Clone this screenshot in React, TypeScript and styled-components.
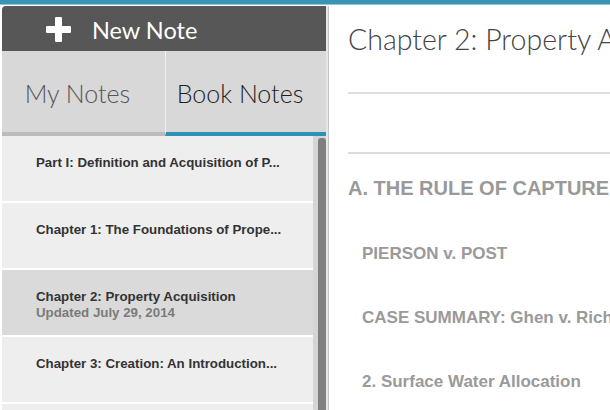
import React from "react";
import styled, { createGlobalStyle } from "styled-components";

const GlobalStyle = createGlobalStyle`
  html, body {
    margin: 0;
    padding: 0;
    background: #ffffff;
    overflow: hidden;
  }
  * { box-sizing: border-box; }
`;

const Page = styled.div`
  width: 610px;
  height: 410px;
  display: flex;
  flex-direction: column;
  overflow: hidden;
  background: #ffffff;
`;

const TopBar = styled.div`
  height: 5px;
  flex: none;
  background: #3a93b3;
  border-bottom: 1px solid #8cc3d6;
`;

const Main = styled.div`
  flex: 1;
  display: flex;
  margin-top: 1px;
  min-height: 0;
`;

const Sidebar = styled.aside`
  width: 324px;
  margin-left: 2px;
  flex: none;
  display: flex;
  flex-direction: column;
`;

const NewNoteButton = styled.div`
  height: 45px;
  flex: none;
  display: flex;
  align-items: center;
  gap: 21px;
  padding: 2px 0 0 44px;
  background: #575757;
  border-top-left-radius: 4px;
  color: #ffffff;
  font-family: Lato, "Liberation Sans", sans-serif;
  font-weight: 400;
  font-size: 23.5px;
`;

const Tabs = styled.div`
  height: 85px;
  flex: none;
  display: flex;
`;

const Tab = styled.div<{ $active?: boolean }>`
  flex: ${(p) => (p.$active ? "0 0 161px" : "0 0 163px")};
  display: flex;
  align-items: center;
  justify-content: center;
  padding: 2px 12px 0 0;
  background: #d8d8d8;
  border-bottom: 4px solid ${(p) => (p.$active ? "#2d92b5" : "#bcbcbc")};
  border-left: ${(p) => (p.$active ? "1px solid #f2f2f2" : "none")};
  color: ${(p) => (p.$active ? "#1e1e1e" : "#555555")};
  font-family: Lato, "Liberation Sans", sans-serif;
  font-weight: 300;
  font-size: 25px;
`;

const ListArea = styled.div`
  flex: 1;
  display: flex;
  min-height: 0;
`;

const List = styled.div`
  flex: 1;
  display: flex;
  flex-direction: column;
  gap: 2px;
  background: #ffffff;
  overflow: hidden;
`;

const Item = styled.div<{ $selected?: boolean }>`
  height: 65px;
  flex: none;
  padding: 19px 0 0 34px;
  background: ${(p) => (p.$selected ? "#dadada" : "#eeeeee")};
  font-family: "Liberation Sans", Arial, sans-serif;
  font-weight: bold;
  font-size: 13.3px;
  line-height: 16px;
`;

const ItemTitle = styled.div`
  color: #333333;
  white-space: nowrap;
`;

const ItemMeta = styled.div`
  color: #7a7a7a;
`;

const ScrollTrack = styled.div`
  width: 13px;
  flex: none;
  display: flex;
  padding: 2px 0 0 5px;
  background: #d5d5d5;
`;

const ScrollThumb = styled.div`
  flex: 1;
  background: #7f7f7f;
  border-radius: 3px 3px 0 0;
`;

const Divider = styled.div`
  width: 3px;
  flex: none;
  background: #e6e6e6;
  border-right: 1px solid #c4c4c4;
`;

const Content = styled.main`
  flex: 1;
  min-width: 0;
  padding: 16px 0 0 19px;
  overflow: hidden;
  display: flex;
  flex-direction: column;
`;

const Title = styled.h1`
  margin: 0;
  height: 70px;
  flex: none;
  font-family: Lato, "Liberation Sans", sans-serif;
  font-weight: 300;
  font-size: 28.5px;
  line-height: 34px;
  color: #444444;
  white-space: nowrap;
`;

const Rule = styled.div`
  height: 2px;
  flex: none;
  background: #dddddd;
`;

const Gap = styled.div<{ $h: number }>`
  height: ${(p) => p.$h}px;
  flex: none;
`;

const Section = styled.div`
  height: 68px;
  flex: none;
  font-family: "Liberation Sans", Arial, sans-serif;
  font-weight: bold;
  font-size: 20px;
  line-height: 24px;
  color: #999999;
  padding-top: 22px;
  white-space: nowrap;
`;

const Entry = styled.div`
  height: 64px;
  flex: none;
  padding-left: 14px;
  font-family: "Liberation Sans", Arial, sans-serif;
  font-weight: bold;
  font-size: 17px;
  line-height: 20px;
  color: #9a9a9a;
  white-space: nowrap;
  display: flex;
  align-items: center;
`;

const PlusIcon = () => (
  <svg width="25" height="25" viewBox="0 0 25 25" aria-hidden="true">
    <rect x="9" y="0" width="7" height="25" rx="1" fill="#ffffff" />
    <rect x="0" y="9" width="25" height="7" rx="1" fill="#ffffff" />
  </svg>
);

const notes = [
  { title: "Part I: Definition and Acquisition of P..." },
  { title: "Chapter 1: The Foundations of Prope..." },
  { title: "Chapter 2: Property Acquisition", meta: "Updated July 29, 2014", selected: true },
  { title: "Chapter 3: Creation: An Introduction..." },
  { title: "" },
];

export default function App() {
  return (
    <>
      <GlobalStyle />
      <Page>
        <TopBar />
        <Main>
          <Sidebar>
            <NewNoteButton>
              <PlusIcon />
              <span>New Note</span>
            </NewNoteButton>
            <Tabs>
              <Tab>My Notes</Tab>
              <Tab $active>Book Notes</Tab>
            </Tabs>
            <ListArea>
              <List>
                {notes.map((n, i) => (
                  <Item key={i} $selected={n.selected}>
                    <ItemTitle>{n.title}</ItemTitle>
                    {n.meta && <ItemMeta>{n.meta}</ItemMeta>}
                  </Item>
                ))}
              </List>
              <ScrollTrack>
                <ScrollThumb />
              </ScrollTrack>
            </ListArea>
          </Sidebar>
          <Divider />
          <Content>
            <Title>Chapter 2: Property Acquisition</Title>
            <Rule />
            <Gap $h={58} />
            <Rule />
            <Section>A. THE RULE OF CAPTURE</Section>
            <Entry>PIERSON v. POST</Entry>
            <Entry>CASE SUMMARY: Ghen v. Rich</Entry>
            <Entry>2. Surface Water Allocation</Entry>
          </Content>
        </Main>
      </Page>
    </>
  );
}
